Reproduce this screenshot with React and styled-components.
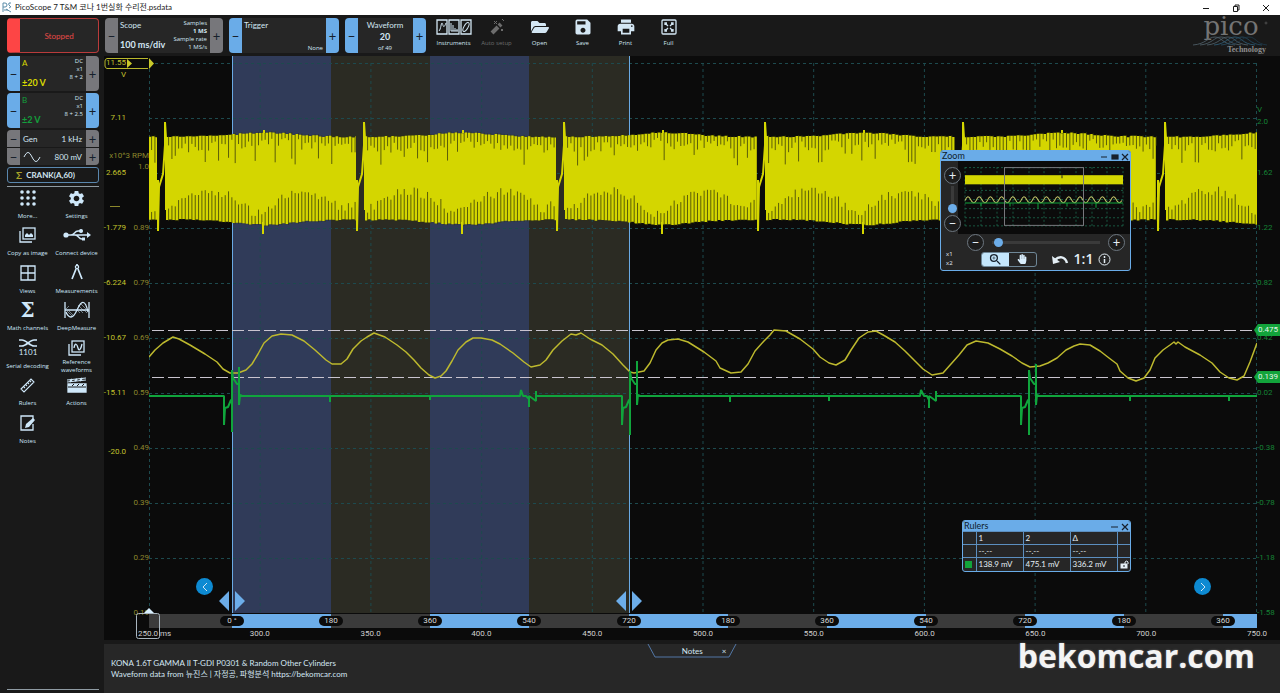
import React, { useState } from "react";
import styled, { createGlobalStyle } from "styled-components";
import { FaFolderOpen, FaHandPaper } from "react-icons/fa";
import { MdPrint, MdSave, MdSettings, MdZoomIn } from "react-icons/md";

const PLOT = { x: 149, y: 56, width: 1108, height: 557 };
const PERIOD_STARTS = [165, 364, 564, 765, 963, 1165];

const voltTicks = [
  { text: "11.55", below: "V" },
  { text: "7.11" },
  { text: "2.665", dash: true },
  { text: "-1.779" },
  { text: "-6.224" },
  { text: "-10.67" },
  { text: "-15.11" },
  { text: "-20.0", edge: "start" },
  { text: "" },
  { text: "" },
  { text: "" },
];
const rpmTicks = [
  { text: "" },
  { text: "", unit: "x10^3 RPM", raised: true },
  { text: "1.0", edge: "end" },
  { text: "0.89" },
  { text: "0.79" },
  { text: "0.69" },
  { text: "0.59" },
  { text: "0.49" },
  { text: "0.39" },
  { text: "0.29" },
  { text: "0.19" },
];
const channelBTicks = [
  { text: "", unit: "V" },
  { text: "2.0", edge: "start" },
  { text: "1.62" },
  { text: "1.22" },
  { text: "0.82" },
  { text: "0.42" },
  { text: "0.02" },
  { text: "-0.38" },
  { text: "-0.78" },
  { text: "-1.18" },
  { text: "-1.58" },
];
const phases = [
  { grow: 83 },
  { grow: 99, label: "0 °", on: true },
  { grow: 99, label: "180" },
  { grow: 99, label: "360", on: true },
  { grow: 100, label: "540" },
  { grow: 99, label: "720", on: true },
  { grow: 99, label: "180" },
  { grow: 99, label: "360", on: true },
  { grow: 99, label: "540" },
  { grow: 99, label: "720", on: true },
  { grow: 99, label: "180" },
  { grow: 34, label: "360", on: true },
];
const times = ["250.0", "300.0", "350.0", "400.0", "450.0", "500.0", "550.0", "600.0", "650.0", "700.0", "750.0"];

const curve =
  "149,357 155,350 163,343 173,337 179,339 190,345 205,354 217,362 223,369 230,373 238,373 246,370 252,364 258,354 264,343 272,336 281,334 292,335 304,341 315,350 326,360 332,364 341,364 347,359 353,349 361,341 367,337 374,333 385,337 397,345 406,352 414,360 421,368 429,375 435,378 441,376 446,371 452,361 458,350 466,342 473,338 481,338 492,340 500,344 513,353 524,362 531,367 540,365 546,360 553,350 562,341 571,334 576,335 581,333 590,339 602,345 613,354 623,365 630,372 634,373 644,371 650,363 656,350 662,343 668,340 678,339 688,342 704,352 716,361 720,368 731,373 741,372 748,364 755,351 764,341 770,335 774,330 786,331 800,339 813,349 820,357 829,363 836,365 845,360 851,350 859,338 868,332 876,331 885,336 895,342 905,351 914,360 923,369 932,375 943,373 951,364 959,355 967,345 976,341 988,343 1000,349 1012,356 1022,363 1030,367 1040,366 1048,363 1057,358 1066,350 1074,346 1080,344 1090,345 1100,351 1109,358 1117,364 1120,371 1128,378 1136,381 1144,378 1150,370 1155,358 1163,350 1170,345 1174,342 1176,344 1178,342 1185,347 1200,355 1212,363 1220,372 1229,378 1237,380 1244,376 1250,362 1257,343";

const camPulse = (x, top, bottom, last) =>
  `V396 H${x} V425 L${x + 1},408 L${x + 4},407 L${x + 7},400 H${x + 8} V${bottom} V${top} L${x + 9},378 L${x + 13},384 H${x + 15} V${last} V405 L${x + 16},395 L${x + 18},396`;
const blip = (x, y) => `H${x} V${y} V396`;
const cam = [
  "M149,396 H180",
  camPulse(224, 370, 432, 367),
  blip(330, 402),
  blip(430, 400),
  "H520 L521,390 L523,396 H526 L529,399",
  blip(529, 407),
  "L532,398 L536,401",
  blip(536, 391),
  camPulse(622, 371, 435, 361),
  blip(730, 402),
  blip(829, 401),
  "H920 L921,390 L924,396 H927 L929,400",
  blip(929, 408),
  "L932,398 L936,401",
  blip(936, 391),
  camPulse(1021, 370, 435, 364),
  blip(1130, 401),
  blip(1229, 401),
  "H1257",
].join(" ");

// cheap repeatable noise, 0..1
const noise = (n) => {
  const s = Math.sin(n * 12.9898) * 43758.5453;
  return s - Math.floor(s);
};

const getCrankBlocks = () => {
  const blocks = [{ from: 149, to: 157 }];
  PERIOD_STARTS.forEach((start, i) => {
    const next = PERIOD_STARTS[i + 1];
    blocks.push({ from: start + 1, to: next ? next - 8 : 1257 });
  });
  return blocks.map(({ from, to }) => {
    const slits = [];
    const top = [];
    const bottom = [];
    const bulge = (x) => {
      const t = (x - from - 98) / 40;
      return from < 160 ? 0 : Math.exp(-t * t);
    };
    for (let x = from; x < to; x += 3.33) {
      const crest = 136 - bulge(x) * 4 + noise(x) * 1.5;
      const trough = 219 + bulge(x) * 5 + noise(x + 5) * 1.5;
      top.push(`${x},${crest} ${Math.min(x + 2, to)},${crest}`);
      bottom.unshift(`${Math.min(x + 2, to)},${trough} ${x},${trough}`);
      const sx = x + 2.6;
      if (sx < to) {
        const up = 5 + noise(x * 3) * 11 + (noise(x * 7) > 0.8 ? 14 : 0);
        const wave = Math.abs(Math.sin((x - from) / 28));
        const down = 5 + wave * 20 + noise(x * 5) * 9;
        slits.push(`M${sx},${crest - 1} V${crest + up} M${sx},${trough + 1} V${trough - down}`);
      }
    }
    return { from, to, points: `${top.join(" ")} ${bottom.join(" ")}`, slits: slits.join(" "), mid: from + 98 };
  });
};
const crankBlocks = getCrankBlocks();

const ChartSvg = () => (
  <Plot viewBox={`${PLOT.x} ${PLOT.y} ${PLOT.width} ${PLOT.height}`} preserveAspectRatio="none" aria-label="Waveform">
    <rect x="232" y="56" width="99" height="557" fill="#303b59" />
    <rect x="331" y="56" width="99" height="557" fill="#2b2b23" />
    <rect x="430" y="56" width="99" height="557" fill="#303b59" />
    <rect x="529" y="56" width="100" height="557" fill="#2b2b23" />
    <g stroke="#1d4a4e" strokeWidth="1" strokeDasharray="3 3">
      {times.map((time, i) => (
        <line key={time} x1={149.5 + i * 110.7} x2={149.5 + i * 110.7} y1="63" y2="613" />
      ))}
      {rpmTicks.map((tick, i) => (
        <line key={i} x1="149" x2="1257" y1={63.5 + i * 55} y2={63.5 + i * 55} />
      ))}
    </g>
    <line x1="232.5" x2="232.5" y1="56" y2="613" stroke="#6aaae4" />
    <line x1="629.5" x2="629.5" y1="56" y2="613" stroke="#6aaae4" />
    {crankBlocks.map((block) => (
      <g key={block.from}>
        <polygon points={block.points} fill="#d4d600" />
        <path d={block.slits} stroke="#34360a" strokeWidth="1" opacity="0.75" />
        {block.to - block.from > 180 && <path d={`M${block.mid},133 V130 M${block.mid - 1},222 V234`} stroke="#d4d600" strokeWidth="2" />}
      </g>
    ))}
    {PERIOD_STARTS.map((x) => (
      <path key={x} d={`M${x - 7},180 V231 L${x - 6},187 L${x - 2},174 L${x},145 V122 L${x + 1},138 V210`} fill="none" stroke="#d4d600" strokeWidth="2" />
    ))}
    <g stroke="#c9c4cf" strokeDasharray="12 4">
      <line x1="152" x2="1257" y1="330.5" y2="330.5" />
      <line x1="152" x2="1257" y1="377.5" y2="377.5" />
    </g>
    <polyline points={curve} fill="none" stroke="#bdb92e" strokeWidth="1.5" strokeLinejoin="round" />
    <path d={cam} fill="none" stroke="#10a53c" strokeWidth="2" strokeLinejoin="bevel" />
    <path d="M229,591 V611 L219,601 Z M235,591 V611 L245,601 Z M626,591 V611 L616,601 Z M632,591 V611 L642,601 Z" fill="#6cade9" />
  </Plot>
);

const Axis = ({ ticks, color, width, align }) => (
  <AxisColumn $color={color} $width={width} $align={align}>
    {ticks.map((tick, i) => (
      <AxisCell key={i} $last={i === ticks.length - 1}>
        <AxisLabel $edge={tick.edge}>{tick.text}</AxisLabel>
        {tick.below && <span>{tick.below}</span>}
        {tick.unit && <AxisUnit $raised={tick.raised}>{tick.unit}</AxisUnit>}
        {tick.dash && <AxisDash />}
      </AxisCell>
    ))}
  </AxisColumn>
);

const Stepper = ({ name, width, minus, plus, children }) => (
  <Tile $width={width}>
    <StepButton $on={minus} aria-label={`${name} down`}>
      −
    </StepButton>
    <TileBody>{children}</TileBody>
    <StepButton $on={plus} aria-label={`${name} up`}>
      +
    </StepButton>
  </Tile>
);

const Icon = ({ width = 18, height = 18, children, ...rest }) => (
  <svg width={width} height={height} viewBox={`0 0 ${width} ${height}`} fill="none" stroke="currentColor" strokeWidth="1.3" aria-hidden="true" {...rest}>
    {children}
  </svg>
);

const PicoAppIcon = () => (
  <Icon width={10} height={11} stroke="#5b8ca8" strokeWidth="1">
    <path d="M1,10 V1 H3 Q5,1 5,3 T3,5 H1 M9,1 H7 Q6,3 8,4 T7,6 M2,8 H6 M4,7 L9,10" />
  </Icon>
);

const InstrumentsIcon = () => (
  <Icon width={36} height={17}>
    <path d="M1,1 h10 v14 h-10 z M13,1 h10 v14 h-10 z M25,1 h10 v14 h-10 z" />
    <path d="M3,12 C5,10 5,4 6,4 S7,12 10,4 M15,4 V12 H22 M17,12 V6 M19,12 V9 M21,12 V10" strokeWidth="1" />
    <ellipse cx="30" cy="8" rx="2" ry="5" transform="rotate(30 30 8)" strokeWidth="1" />
  </Icon>
);

const WandIcon = () => (
  <Icon width={16} height={18}>
    <path d="M3,15 L9,9" strokeWidth="4" />
    <path d="M10,8 L12,6" strokeWidth="4" />
    <path d="M5,3 L8,6 M8,3 L5,6 M12,11 L14,13 M14,11 L12,13 M13,1 L15,3" strokeWidth="1" />
  </Icon>
);

const FullIcon = () => (
  <Icon width={16} height={16}>
    <rect x="1" y="1" width="14" height="14" rx="1" />
    <path d="M4,6 V4 H6 M4,4 L7,7 M10,4 H12 V6 M12,4 L9,7 M4,10 V12 H6 M4,12 L7,9 M10,12 H12 V10 M12,12 L9,9" />
  </Icon>
);

const MoreIcon = () => (
  <Icon width={16} height={16} stroke="none" fill="currentColor">
    {[2, 8, 14].map((y) => [2, 8, 14].map((x) => <circle key={`${x}-${y}`} cx={x} cy={y} r="1.8" />))}
  </Icon>
);

const CopyIcon = () => (
  <Icon width={18} height={16}>
    <path d="M1,4 V15 H13" />
    <rect x="4" y="1" width="12" height="11" />
    <path d="M6,10 V8 L8,6 L10,8 L12,6 L14,8 V10 Z" fill="currentColor" stroke="none" />
  </Icon>
);

const UsbIcon = () => (
  <Icon width={28} height={14}>
    <circle cx="3" cy="7" r="2.6" fill="currentColor" stroke="none" />
    <path d="M3,7 H25 M8,7 C12,7 11,3 15,3 H18 M12,7 C16,7 15,11 19,11 H20" />
    <path d="M24,4 L28,7 L24,10 Z" fill="currentColor" stroke="none" />
    <circle cx="18" cy="3" r="1.4" fill="currentColor" />
    <rect x="19" y="9.5" width="3" height="3" fill="currentColor" stroke="none" />
  </Icon>
);

const ViewsIcon = () => (
  <Icon width={16} height={16}>
    <path d="M1,1 H15 V15 H1 Z M8,1 V15 M1,8 H15" />
  </Icon>
);

const CompassIcon = () => (
  <Icon width={16} height={17}>
    <circle cx="8" cy="3" r="1.6" />
    <path d="M7,5 L3,15 M9,5 L13,15 M8,0 V1" strokeWidth="1.7" />
  </Icon>
);

const SigmaIcon = () => <Sigma>Σ</Sigma>;

const DeepMeasureIcon = () => (
  <Icon width={26} height={18}>
    <path d="M1,1 V17 M25,1 V17 M1,9 H25" />
    <path d="M3,10 L9,16 M5,10 L10,15 M14,4 L20,10 M2,12 L5,15 M16,2 L22,8 M2,8 L5,5 M13,9 L16,12 M16,9 L19,12 M20,9 L23,12" strokeWidth="0.7" opacity="0.7" />
    <path d="M2,11 C5,18 9,18 13,9 S21,-3 24,11" />
  </Icon>
);

const SerialIcon = () => (
  <Icon width={20} height={20}>
    <path d="M1,2 H4 C8,2 12,8 16,8 H19 M1,8 H4 C8,8 12,2 16,2 H19" strokeWidth="1.6" />
    <text x="10" y="17" textAnchor="middle" fontSize="8" fill="currentColor" stroke="none">
      1101
    </text>
  </Icon>
);

const ReferenceIcon = () => (
  <Icon width={18} height={16}>
    <path d="M1,4 V15 H13" />
    <rect x="4" y="1" width="12" height="11" />
    <path d="M6,8 C7,2 9,4 10,8 S13,9 14,4" />
  </Icon>
);

const RulerIcon = () => (
  <Icon width={16} height={16}>
    <path d="M1,12 L11,2 L14,5 L4,15 Z M4,10 L5,11 M6,8 L7,9 M8,6 L9,7 M10,4 L11,5" strokeWidth="1.1" />
  </Icon>
);

const ActionsIcon = () => (
  <Icon width={20} height={16}>
    <path d="M1,7 H19 V15 H1 Z" fill="currentColor" />
    <path d="M0,3 L19,1 M0,5 L19,3" strokeWidth="1" />
    <path d="M3,5 L5,2 M8,4 L10,2 M13,4 L15,1" strokeWidth="2" />
    <path d="M1,10 H19 M5,9 L7,7 M10,9 L12,7 M15,9 L17,7" stroke="#191919" strokeWidth="1" />
  </Icon>
);

const NotesIcon = () => (
  <Icon width={16} height={16}>
    <path d="M13,9 V15 H1 V1 H13 V4" />
    <path d="M5,13 L6,9 L13,3 L15,5 L9,12 Z" fill="currentColor" stroke="none" />
  </Icon>
);

const tools = [
  { label: "Instruments", icon: <InstrumentsIcon /> },
  { label: "Auto setup", icon: <WandIcon />, disabled: true },
  { label: "Open", icon: <FaFolderOpen size={18} /> },
  { label: "Save", icon: <MdSave size={20} /> },
  { label: "Print", icon: <MdPrint size={20} /> },
  { label: "Full", icon: <FullIcon /> },
];

const menu = [
  { label: "More...", icon: <MoreIcon /> },
  { label: "Settings", icon: <MdSettings size={19} /> },
  { label: "Copy as image", icon: <CopyIcon /> },
  { label: "Connect device", icon: <UsbIcon /> },
  { label: "Views", icon: <ViewsIcon /> },
  { label: "Measurements", icon: <CompassIcon /> },
  { label: "Math channels", icon: <SigmaIcon /> },
  { label: "DeepMeasure", icon: <DeepMeasureIcon /> },
  { label: "Serial decoding", icon: <SerialIcon /> },
  { label: "Reference\nwaveforms", icon: <ReferenceIcon /> },
  { label: "Rulers", icon: <RulerIcon /> },
  { label: "Actions", icon: <ActionsIcon /> },
  { label: "Notes", icon: <NotesIcon /> },
];

const ZoomWindow = () => {
  const [vertical, setVertical] = useState(2);
  const [horizontal, setHorizontal] = useState(2);

  return (
    <FloatingWindow $top={94} $width={191}>
      <WindowHeader>
        Zoom
        <WindowIcons />
      </WindowHeader>
      <ZoomMain>
        <ZoomSide>
          <RoundButton aria-label="Zoom in vertically">+</RoundButton>
          <VerticalRange type="range" aria-label="Vertical zoom" value={vertical} onChange={(e) => setVertical(Number(e.target.value))} />
          <RoundButton aria-label="Zoom out vertically">−</RoundButton>
        </ZoomSide>
        <Overview viewBox="958 162 172 72" preserveAspectRatio="none">
          <g stroke="#1c6a4e" strokeWidth="0.8" strokeDasharray="2 2">
            <path d="M965,168.5 H1123 M965,191 H1123 M965,200 H1123 M965,209 H1123 M965,218 H1123 M965,226 H1123" />
            <path d="M965,168 V226 M981,168 V226 M997,168 V226 M1013,168 V226 M1029,168 V226 M1044,168 V226 M1060,168 V226 M1076,168 V226 M1092,168 V226 M1107,168 V226 M1123,168 V226" />
          </g>
          <rect x="965" y="176" width="158" height="9" fill="#d4d600" />
          <path d="M1062,176 V179" stroke="#222" />
          <path d={`M965,201 ${Array.from({ length: 14 }, () => "q2.8,-7 5.6,-1 t5.6,1").join(" ")}`} fill="none" stroke="#c3c46a" />
          <path d="M965,203.5 H981 V207 V203.5 H1010 V207 V203.5 H1038 V209 V203.5 H1067 V207 V203.5 H1096 V208 V203.5 H1123" fill="none" stroke="#10a53c" />
          <rect x="1004.5" y="168.5" width="79" height="57" fill="none" stroke="#77777c" />
        </Overview>
      </ZoomMain>
      <ZoomSliderRow>
        <RoundButton aria-label="Zoom out">−</RoundButton>
        <Range type="range" aria-label="Horizontal zoom" value={horizontal} onChange={(e) => setHorizontal(Number(e.target.value))} />
        <RoundButton aria-label="Zoom in">+</RoundButton>
      </ZoomSliderRow>
      <ZoomTools>
        <Factors>
          <span>x1</span>
          <span>x2</span>
        </Factors>
        <Toggle>
          <ToggleButton $on aria-label="Zoom tool">
            <MdZoomIn size={15} />
          </ToggleButton>
          <ToggleButton aria-label="Pan tool">
            <FaHandPaper size={10} />
          </ToggleButton>
        </Toggle>
        <PlainButton aria-label="Undo zoom">
          <Icon width={18} height={13}>
            <path d="M4,7 C8,3 14,3 16,10" strokeWidth="2.5" />
            <path d="M1,3 L2,11 L9,9 Z" fill="currentColor" stroke="none" />
          </Icon>
        </PlainButton>
        <OneToOne>1:1</OneToOne>
        <PlainButton aria-label="Zoom help">
          <Icon width={13} height={13} strokeWidth="1">
            <circle cx="6.5" cy="6.5" r="5.5" />
            <path d="M6.5,6 V10 M6.5,3 V5" strokeWidth="1.5" />
          </Icon>
        </PlainButton>
      </ZoomTools>
    </FloatingWindow>
  );
};

const WindowIcons = ({ small }) => (
  <Icon width={30} height={9} stroke="#17202c" strokeWidth="1.2">
    {small ? <path d="M11,5 H18" /> : <path d="M1,5 H7" />}
    {!small && <rect x="12" y="3" width="6" height="4" fill="#17202c" />}
    <path d="M22,2 L28,8 M28,2 L22,8" />
  </Icon>
);

const RulersWindow = () => (
  <FloatingWindow $top={464} $width={169}>
    <WindowHeader>
      Rulers
      <WindowIcons small />
    </WindowHeader>
    <RulerTable>
      <colgroup>
        <col width="13" />
        <col />
        <col />
        <col />
        <col width="13" />
      </colgroup>
      <thead>
        <tr>
          <th />
          <th>1</th>
          <th>2</th>
          <th>Δ</th>
          <th />
        </tr>
      </thead>
      <tbody>
        <tr>
          <td />
          <td>--.--</td>
          <td>--.--</td>
          <td>--.--</td>
          <td />
        </tr>
        <tr>
          <td>
            <Swatch />
          </td>
          <td>138.9 mV</td>
          <td>475.1 mV</td>
          <td>336.2 mV</td>
          <td>
            <Icon width={9} height={9} strokeWidth="1">
              <rect x="1" y="4" width="6" height="4" fill="currentColor" />
              <path d="M5,4 V2 Q7,0 8,2 V4" />
              <path d="M4,5 V7" stroke="#222" />
            </Icon>
          </td>
        </tr>
      </tbody>
    </RulerTable>
  </FloatingWindow>
);

const Logo = () => (
  <LogoBox>
    <svg width="80" height="41" viewBox="0 0 80 41" overflow="visible" aria-label="pico Technology">
      <text x="39" y="20" textAnchor="middle" fontFamily="DejaVu Serif, serif" fontSize="26" fill="#747474">
        pico
      </text>
      <circle cx="74" cy="8" r="1" fill="none" stroke="#666" strokeWidth="0.6" />
      <g fill="none" stroke="#53656f" strokeWidth="0.8">
        <path d="M1,30 C14,29 16,22 23,22 S30,29 43,30" />
        <path d="M8,30 C20,29 22,22 29,22 S36,29 49,30" />
        <path d="M15,30 C27,29 29,22 36,22 S43,29 56,30" />
        <path d="M22,30 C34,29 36,22 43,22 S50,29 63,30" stroke="#2f617c" />
        <path d="M29,30 C41,29 43,22 50,22 S57,29 70,30" stroke="#264f67" />
        <path d="M36,30 C48,29 50,22 57,22 S64,29 75,30" stroke="#1d3a4b" />
      </g>
      <text x="74" y="37" textAnchor="end" fontFamily="Liberation Serif, serif" fontWeight="bold" fontSize="8" fill="#8d8d8d">
        Technology
      </text>
    </svg>
  </LogoBox>
);

const App = () => {
  return (
    <Page>
      <GlobalStyle />
      <TitleBar>
        <PicoAppIcon />
        <h1>PicoScope 7 T&M 코나 1번실화 수리전.psdata</h1>
        <WindowButtons>
          <PlainButton aria-label="Minimize">
            <Icon width={8} height={8} strokeWidth="1">
              <path d="M1,4.5 H7" />
            </Icon>
          </PlainButton>
          <PlainButton aria-label="Restore">
            <Icon width={8} height={8} strokeWidth="1">
              <path d="M1.5,2.5 H5.5 V7.5 H1.5 Z M3,2 V1 H7 V6 H6" />
            </Icon>
          </PlainButton>
          <PlainButton aria-label="Close">
            <Icon width={8} height={8} strokeWidth="1">
              <path d="M1,1 L7,7 M7,1 L1,7" />
            </Icon>
          </PlainButton>
        </WindowButtons>
      </TitleBar>

      <Toolbar>
        <StoppedButton>Stopped</StoppedButton>
        <Stepper name="Timebase" width={118}>
          <TileColumn>
            <TileName>Scope</TileName>
            <TileValue>100 ms/div</TileValue>
          </TileColumn>
          <TileDetails>
            <span>Samples</span>
            <b>1 MS</b>
            <span>Sample rate</span>
            <span>1 MS/s</span>
          </TileDetails>
        </Stepper>
        <Stepper name="Trigger" width={110} minus plus>
          <TileColumn>
            <TileName>Trigger</TileName>
          </TileColumn>
          <TileDetails $end>None</TileDetails>
        </Stepper>
        <Stepper name="Waveform" width={81} minus plus>
          <WaveformCount>
            <TileName>Waveform</TileName>
            <b>20</b>
            <small>of 49</small>
          </WaveformCount>
        </Stepper>
        <Tools>
          {tools.map((tool) => (
            <ToolButton key={tool.label} disabled={tool.disabled}>
              <ToolIcon>{tool.icon}</ToolIcon>
              {tool.label}
            </ToolButton>
          ))}
        </Tools>
        <Logo />
      </Toolbar>

      <Main>
        <Sidebar>
          <Channels>
            <Stepper name="Channel A" minus>
              <TileColumn $color="#d8d800">
                <TileName>A</TileName>
                <TileValue>±20 V</TileValue>
              </TileColumn>
              <TileDetails>
                <span>DC</span>
                <span>x1</span>
                <span>8 + 2</span>
              </TileDetails>
            </Stepper>
            <Stepper name="Channel B" minus plus>
              <TileColumn $color="#13a03c">
                <TileName>B</TileName>
                <TileValue>±2 V</TileValue>
              </TileColumn>
              <TileDetails>
                <span>DC</span>
                <span>x1</span>
                <span>8 + 2.5</span>
              </TileDetails>
            </Stepper>
            <Generator>
              <GeneratorRow>
                <StepButton aria-label="Frequency down">−</StepButton>
                <GeneratorValue>
                  <span>Gen</span>
                  <span>1 kHz</span>
                </GeneratorValue>
                <StepButton aria-label="Frequency up">+</StepButton>
              </GeneratorRow>
              <GeneratorRow>
                <StepButton aria-label="Amplitude down">−</StepButton>
                <GeneratorValue>
                  <Icon width={18} height={10} strokeWidth="1">
                    <path d="M1,5 C4,-1 6,-1 9,5 S14,11 17,5" />
                  </Icon>
                  <span>800 mV</span>
                </GeneratorValue>
                <StepButton aria-label="Amplitude up">+</StepButton>
              </GeneratorRow>
            </Generator>
            <MathButton>
              <i>Σ</i>CRANK(A,60)
            </MathButton>
          </Channels>
          <Menu>
            {menu.map((item) => (
              <MenuButton key={item.label}>
                <MenuIcon>{item.icon}</MenuIcon>
                <MenuLabel>{item.label}</MenuLabel>
              </MenuButton>
            ))}
          </Menu>
          <SidebarEnd />
        </Sidebar>

        <Content>
          <Chart>
            <PlotRow>
              <Axis ticks={voltTicks} color="#c2c12c" width={22} align="flex-end" />
              <Axis ticks={rpmTicks} color="#8b872b" width={23} align="flex-end" />
              <ChartSvg />
              <Axis ticks={channelBTicks} color="#158235" width={23} align="flex-start" />
            </PlotRow>
            <PhaseBar>
              {phases.map((phase, i) => (
                <Phase key={i} $grow={phase.grow} $on={phase.on}>
                  {phase.label && <PhasePill>{phase.label}</PhasePill>}
                </Phase>
              ))}
            </PhaseBar>
            <TimeAxis>
              {times.map((time, i) => (
                <TimeLabel key={time}>
                  {time}
                  {i === 0 && <TimeUnit>ms</TimeUnit>}
                </TimeLabel>
              ))}
            </TimeAxis>
            <AxisMarker width="50" height="14" viewBox="0 0 50 14">
              <path d="M3,2.5 H44 M3,12.5 H44 M3,2.5 Q1,3 1,5 V10 Q1,12 3,12.5" fill="none" stroke="#b9b82c" />
              <path d="M23,3 L28,7.5 L23,12 Z M45,2 L50,7.5 L45,13 Z" fill="#c9c92a" />
            </AxisMarker>
            <TimeMarker width="26" height="32" viewBox="0 0 26 32">
              <rect x="1.5" y="5.5" width="23" height="25" rx="2" fill="none" stroke="#a9b6bf" />
              <path d="M9,5 L14,0 L19,5 Z" fill="#d8efff" />
            </TimeMarker>
            <RulerFlag $top={268}>0.475</RulerFlag>
            <RulerFlag $top={315}>0.139</RulerFlag>
            <ScrollButton $left aria-label="Scroll left">
              <Icon width={6} height={10} strokeWidth="1">
                <path d="M5,1 L1,5 L5,9" />
              </Icon>
            </ScrollButton>
            <ScrollButton aria-label="Scroll right">
              <Icon width={6} height={10} strokeWidth="1">
                <path d="M1,1 L5,5 L1,9" />
              </Icon>
            </ScrollButton>
            <ZoomWindow />
            <RulersWindow />
          </Chart>
          <NotesPanel>
            <NotesTab>
              <NotesTabShape viewBox="0 0 90 14" preserveAspectRatio="none">
                <path d="M1,0 L8,13 H82 L89,0" fill="none" stroke="#5277a6" />
              </NotesTabShape>
              <span>Notes</span>
              <PlainButton aria-label="Close notes">×</PlainButton>
            </NotesTab>
            <NotesText>
              KONA 1.6T GAMMA II T-GDI P0301 & Random Other Cylinders
              <br />
              Waveform data from 뉴진스 | 자정공, 파형분석 https://bekomcar.com
            </NotesText>
            <Watermark>bekomcar.com</Watermark>
          </NotesPanel>
        </Content>
      </Main>
    </Page>
  );
};

const tinyFont = `
  font-family: "Open Sans", sans-serif;
  font-size: 6px;
`;

const GlobalStyle = createGlobalStyle`
  * {
    box-sizing: border-box;
  }
  body {
    margin: 0;
    background-color: #191919;
    color: #d3e6f3;
    font-family: Lato, "Noto Sans CJK KR", sans-serif;
    font-size: 8px;
  }
  button {
    padding: 0;
    border: none;
    background: none;
    color: inherit;
    font: inherit;
    cursor: pointer;
  }
  svg {
    flex: none;
  }
`;
const Page = styled.div`
  min-height: 100vh;
  display: flex;
  flex-direction: column;
`;
const TitleBar = styled.header`
  height: 15px;
  padding: 0 10px 0 2px;
  display: flex;
  align-items: center;
  gap: 3px;
  background-color: white;
  color: #1b1b1b;
  h1 {
    flex: 1;
    margin: 0;
    font-size: 8px;
    line-height: 15px;
    font-weight: normal;
  }
`;
const WindowButtons = styled.div`
  display: flex;
  gap: 22px;
`;
const PlainButton = styled.button`
  display: flex;
  align-items: center;
`;
const Toolbar = styled.div`
  height: 41px;
  padding: 3px 8px 0 7px;
  display: flex;
  align-items: flex-start;
  gap: 6px;
`;
const StoppedButton = styled.button`
  width: 92px;
  height: 35px;
  border: 1px solid #b93b3b;
  border-left: 13px solid #fd4545;
  border-radius: 4px;
  background-color: #262626;
  color: #e64a46;
`;
const Tile = styled.div`
  width: ${({ $width }) => ($width ? `${$width}px` : "auto")};
  height: 35px;
  display: flex;
  border-radius: 4px;
  overflow: hidden;
  background-color: #262626;
`;
const StepButton = styled.button`
  width: 13px;
  flex: none;
  background-color: ${({ $on }) => ($on ? "#6aace8" : "#77777b")};
  color: #16202b;
  font-size: 13px;
  line-height: 14px;
`;
const TileBody = styled.div`
  flex: 1;
  min-width: 0;
  padding: 1px 3px 1px 2px;
  display: flex;
  justify-content: space-between;
`;
const TileColumn = styled.div`
  display: flex;
  flex-direction: column;
  justify-content: space-between;
  color: ${({ $color }) => $color || "#d3e6f3"};
  white-space: nowrap;
`;
const TileName = styled.span`
  font-size: 8px;
  line-height: 12px;
`;
const TileValue = styled.b`
  font-size: 9px;
  line-height: 14px;
`;
const TileDetails = styled.div`
  display: flex;
  flex-direction: column;
  align-items: flex-end;
  justify-content: ${({ $end }) => ($end ? "flex-end" : "flex-start")};
  ${tinyFont}
  line-height: 8px;
  white-space: nowrap;
`;
const WaveformCount = styled.div`
  flex: 1;
  display: flex;
  flex-direction: column;
  align-items: center;
  line-height: 12px;
  b {
    font-size: 9px;
  }
  small {
    ${tinyFont}
    line-height: 10px;
  }
`;
const Tools = styled.div`
  flex: 1;
  display: flex;
`;
const ToolButton = styled.button`
  width: 43px;
  display: flex;
  flex-direction: column;
  align-items: center;
  ${tinyFont}
  line-height: 14px;
  color: #d3e6f3;
  &:disabled {
    color: #6d6d6d;
  }
`;
const ToolIcon = styled.span`
  height: 18px;
  display: flex;
  align-items: center;
`;
const LogoBox = styled.div`
  height: 38px;
  margin-top: -3px;
`;
const Main = styled.main`
  flex: 1;
  display: flex;
`;
const Sidebar = styled.aside`
  width: 104px;
  flex: none;
  padding-bottom: 3px;
  display: flex;
  flex-direction: column;
`;
const Channels = styled.div`
  margin: 0 5px 0 7px;
  padding-bottom: 3px;
  display: flex;
  flex-direction: column;
  gap: 2px;
  border-bottom: 1px solid #8f9ba3;
`;
const Generator = styled.div`
  display: flex;
  flex-direction: column;
  gap: 1px;
  border-radius: 4px;
  overflow: hidden;
`;
const GeneratorRow = styled.div`
  height: 17px;
  display: flex;
  background-color: #262626;
`;
const GeneratorValue = styled.div`
  flex: 1;
  padding: 0 4px 0 3px;
  display: flex;
  align-items: center;
  justify-content: space-between;
`;
const MathButton = styled.button`
  height: 16px;
  padding-left: 8px;
  display: flex;
  align-items: center;
  gap: 4px;
  border: 1px solid #5a87ae;
  border-radius: 3px;
  font-weight: bold;
  i {
    color: #a8a328;
    font-size: 10px;
    font-style: normal;
  }
`;
const Menu = styled.nav`
  height: 262px;
  margin-top: 1px;
  padding: 0 3px;
  display: grid;
  grid-template-columns: 1fr 1fr;
  grid-auto-rows: 1fr;
`;
const MenuButton = styled.button`
  display: flex;
  flex-direction: column;
  align-items: center;
  color: #cfe8fa;
`;
const MenuIcon = styled.span`
  height: 20px;
  display: flex;
  align-items: center;
`;
const MenuLabel = styled.span`
  height: 16px;
  display: flex;
  align-items: center;
  ${tinyFont}
  line-height: 8px;
  white-space: pre;
`;
const Sigma = styled.b`
  font-family: "DejaVu Serif", serif;
  font-size: 20px;
  line-height: 20px;
`;
const SidebarEnd = styled.div`
  margin: auto 5px 0 7px;
  border-bottom: 1px solid #8f9ba3;
`;
const Content = styled.div`
  flex: 1;
  min-width: 0;
  display: flex;
  flex-direction: column;
  gap: 4px;
`;
const Chart = styled.section`
  position: relative;
  flex: 1;
  display: flex;
  flex-direction: column;
  background-color: #0b0b0b;
  font-family: Roboto, sans-serif;
`;
const PlotRow = styled.div`
  flex: 1;
  min-height: 557px;
  display: flex;
`;
const Plot = styled.svg`
  flex: 1;
  min-width: 0;
  width: 100%;
`;
const AxisColumn = styled.div`
  width: ${({ $width }) => $width}px;
  flex: none;
  padding-top: 7px;
  display: flex;
  flex-direction: column;
  color: ${({ $color }) => $color};
  line-height: 12px;
  white-space: nowrap;
  > div {
    align-items: ${({ $align }) => $align};
  }
`;
const AxisCell = styled.div`
  flex: ${({ $last }) => ($last ? "0 0 0px" : "1 1 0px")};
  height: 0;
  display: flex;
  flex-direction: column;
`;
const edgeMargins = { start: "-2px", end: "-12px" };
const AxisLabel = styled.span`
  height: 12px;
  flex: none;
  margin-top: ${({ $edge }) => edgeMargins[$edge] || "-6px"};
`;
const AxisUnit = styled.span`
  margin-top: auto;
  margin-bottom: ${({ $raised }) => ($raised ? "13px" : "4px")};
  line-height: 8px;
`;
const AxisDash = styled.span`
  width: 10px;
  height: 1px;
  margin: auto 6px 21px 0;
  background-color: #8b872b;
`;
const PhaseBar = styled.div`
  height: 14px;
  margin: 1px 23px 0 45px;
  display: flex;
`;
const Phase = styled.div`
  flex: ${({ $grow }) => $grow} 1 0px;
  min-width: 0;
  display: flex;
  align-items: center;
  background-color: ${({ $on }) => ($on ? "#6cade9" : "#3b3b3b")};
`;
const PhasePill = styled.span`
  position: relative;
  width: 24px;
  height: 10px;
  flex: none;
  margin-left: -12px;
  border-radius: 5px;
  background-color: #0b0b0b;
  color: #d8d8d8;
  line-height: 10px;
  text-align: center;
`;
const TimeAxis = styled.div`
  height: 12px;
  margin: 0 23px 0 45px;
  display: flex;
  justify-content: space-between;
  color: #d0d0d0;
  line-height: 12px;
`;
const TimeLabel = styled.span`
  width: 0;
  display: flex;
  justify-content: center;
  white-space: nowrap;
`;
const TimeUnit = styled.span`
  width: 0;
  padding-left: 2px;
`;
const AxisMarker = styled.svg`
  position: absolute;
  top: 0;
  left: 0;
`;
const TimeMarker = styled.svg`
  position: absolute;
  bottom: 0;
  left: 31px;
`;
const RulerFlag = styled.span`
  position: absolute;
  top: ${({ $top }) => $top}px;
  right: 0;
  height: 12px;
  padding: 0 2px 0 4px;
  background-color: #12a33b;
  clip-path: polygon(0 50%, 4px 0, 100% 0, 100% 100%, 4px 100%);
  color: #e3f5e7;
  line-height: 12px;
`;
const ScrollButton = styled.button`
  position: absolute;
  bottom: 45px;
  ${({ $left }) => ($left ? "left: 92px" : "right: 69px")};
  width: 17px;
  height: 17px;
  display: flex;
  align-items: center;
  justify-content: center;
  border-radius: 50%;
  background-color: #0d8ad2;
`;
const FloatingWindow = styled.section`
  position: absolute;
  top: ${({ $top }) => $top}px;
  right: 149px;
  width: ${({ $width }) => $width}px;
  border: 1px solid #6aace8;
  border-radius: 3px;
  overflow: hidden;
  background-color: #262626;
  color: #e4eef5;
  font-family: Lato, sans-serif;
`;
const WindowHeader = styled.header`
  height: 10px;
  padding-left: 1px;
  display: flex;
  align-items: center;
  justify-content: space-between;
  background-color: #6aace8;
  color: #101d2b;
  font-size: 9px;
  line-height: 10px;
`;
const ZoomMain = styled.div`
  height: 73px;
  display: flex;
`;
const ZoomSide = styled.div`
  position: relative;
  width: 17px;
  padding: 6px 0 2px 3px;
  display: flex;
  flex-direction: column;
  align-items: flex-start;
  justify-content: space-between;
  flex: none;
`;
const RoundButton = styled.button`
  width: 17px;
  height: 17px;
  flex: none;
  display: flex;
  align-items: center;
  justify-content: center;
  border: 1px solid #6d7780;
  border-radius: 50%;
  background-color: #1d1d1d;
  font-size: 13px;
  line-height: 13px;
`;
const Range = styled.input`
  flex: 1;
  min-width: 0;
  height: 9px;
  margin: 0 8px;
  appearance: none;
  background: none;
  &::-webkit-slider-runnable-track {
    height: 3px;
    background-color: #3a3a3a;
  }
  &::-webkit-slider-thumb {
    appearance: none;
    width: 9px;
    height: 9px;
    margin-top: -3px;
    border-radius: 50%;
    background-color: #6cade9;
  }
`;
const VerticalRange = styled(Range)`
  flex: none;
  width: 9px;
  height: 28px;
  margin: 0 4px;
  writing-mode: vertical-lr;
  direction: rtl;
  &::-webkit-slider-runnable-track {
    width: 3px;
    height: auto;
  }
  &::-webkit-slider-thumb {
    margin-top: 0;
    margin-left: -3px;
  }
`;
const Overview = styled.svg`
  flex: 1;
  height: 73px;
  background-color: #0b0b0b;
`;
const ZoomSliderRow = styled.div`
  height: 17px;
  padding: 0 5px 0 26px;
  display: flex;
  align-items: center;
`;
const ZoomTools = styled.div`
  height: 19px;
  padding: 0 19px 3px 5px;
  display: flex;
  align-items: center;
  justify-content: space-between;
`;
const Factors = styled.div`
  width: 20px;
  display: flex;
  flex-direction: column;
  ${tinyFont}
  line-height: 9px;
`;
const Toggle = styled.div`
  width: 56px;
  height: 15px;
  margin: 0 10px;
  display: flex;
  border: 1px solid #6f8797;
  border-radius: 3px;
  overflow: hidden;
`;
const ToggleButton = styled.button`
  flex: 1;
  display: flex;
  align-items: center;
  justify-content: center;
  background-color: ${({ $on }) => ($on ? "#c4e6fb" : "transparent")};
  color: ${({ $on }) => ($on ? "#16202b" : "#d9eefc")};
`;
const OneToOne = styled.button`
  font-family: "Open Sans", sans-serif;
  font-size: 14px;
  line-height: 14px;
  font-weight: 600;
`;
const RulerTable = styled.table`
  width: 100%;
  table-layout: fixed;
  border-collapse: collapse;
  font-size: 8px;
  line-height: 11px;
  th,
  td {
    height: 13px;
    padding: 0 0 0 2px;
    border: 1px solid #5c8fbf;
    font-weight: normal;
    text-align: left;
    white-space: nowrap;
  }
  tr > :first-child {
    border-left: none;
  }
  tr > :last-child {
    border-right: none;
  }
  tbody tr:last-child td {
    border-bottom: none;
  }
  svg {
    display: block;
  }
`;
const Swatch = styled.span`
  display: block;
  width: 7px;
  height: 7px;
  background-color: #12a33b;
`;
const NotesPanel = styled.section`
  position: relative;
  height: 49px;
  flex: none;
  background-color: #272727;
`;
const NotesTab = styled.div`
  position: relative;
  width: 90px;
  height: 14px;
  margin: 0 auto;
  padding-left: 24px;
  display: flex;
  align-items: center;
  justify-content: center;
  gap: 19px;
`;
const NotesTabShape = styled.svg`
  position: absolute;
  inset: 0;
  width: 100%;
  height: 100%;
`;
const NotesText = styled.p`
  margin: 0;
  padding-left: 7px;
  font-size: 8px;
  line-height: 11px;
`;
const Watermark = styled.span`
  position: absolute;
  top: -5px;
  right: 25px;
  color: #f4f4f4;
  font-family: "Open Sans", sans-serif;
  font-size: 32px;
  line-height: 34px;
  font-weight: bold;
  text-shadow: 0 0 2px #777;
`;

export default App;
